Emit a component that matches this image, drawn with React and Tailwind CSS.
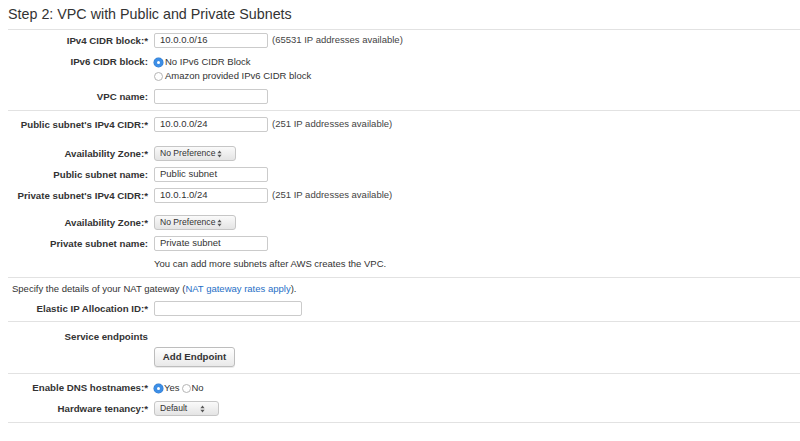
import clsx from "clsx";

function Field({ value = "", w = "w-[114px]", h = "h-[15px]" }) {
  return (
    <div
      className={clsx(
        "flex items-center whitespace-nowrap rounded-[2px] border border-[#cbcbcb] bg-white pl-[5px] text-[9.5px] text-[#333]",
        w,
        h,
      )}
    >
      {value}
    </div>
  );
}

function Arrows() {
  return (
    <svg width="5" height="8" viewBox="0 0 5 8" className="shrink-0">
      <path d="M2.5 0.5 L4.6 3.2 H0.4 Z" fill="#555" />
      <path d="M2.5 7.5 L4.6 4.8 H0.4 Z" fill="#555" />
    </svg>
  );
}

function Select({ value, w }) {
  return (
    <div
      className={clsx(
        "flex h-[15px] items-center justify-between whitespace-nowrap rounded-[3px] border border-[#c6c6c6] bg-gradient-to-b from-[#fafafa] to-[#e4e4e4] pl-[5px] pr-[13px] text-[8.6px] text-[#333]",
        w,
      )}
    >
      <span>{value}</span>
      <Arrows />
    </div>
  );
}

function Radio({ checked }) {
  return checked ? (
    <span className="flex h-[9px] w-[9px] shrink-0 items-center justify-center rounded-full bg-[#3d8ee6] ring-[0.5px] ring-[#2f78c8]">
      <span className="h-[3px] w-[3px] rounded-full bg-white" />
    </span>
  ) : (
    <span className="h-[9px] w-[9px] shrink-0 rounded-full border border-[#b5b5b5] bg-white" />
  );
}

function Row({ label, children, className, top }) {
  return (
    <div className={clsx("flex", top ? "items-start" : "items-center", className)}>
      <div className="w-[140px] shrink-0 whitespace-nowrap text-right text-[9.7px] font-bold leading-[14px] text-[#333]">
        {label}
      </div>
      <div className="ml-[6px] flex items-center">{children}</div>
    </div>
  );
}

function Note({ children }) {
  return <span className="ml-[4px] whitespace-nowrap text-[9.5px] text-[#444]">{children}</span>;
}

export default function App() {
  return (
    <div className="min-h-[441px] w-[800px] bg-white pl-[8px] font-['Liberation_Sans',Arial,sans-serif] text-[#333]">
      <div className="flex h-[29px] items-center text-[14.3px] text-[#333]">
        Step 2: VPC with Public and Private Subnets
      </div>

      <section className="border-t border-[#e2e2e2] pt-[3px] pb-[6px]">
        <Row label="IPv4 CIDR block:*">
          <Field value="10.0.0.0/16" />
          <Note>(65531 IP addresses available)</Note>
        </Row>
        <Row label="IPv6 CIDR block:" top className="mt-[7px]">
          <div className="flex flex-col text-[9.5px] leading-[14px]">
            <div className="flex items-center gap-[2px]">
              <Radio checked />
              No IPv6 CIDR Block
            </div>
            <div className="flex items-center gap-[2px]">
              <Radio />
              Amazon provided IPv6 CIDR block
            </div>
          </div>
        </Row>
        <Row label="VPC name:" className="mt-[6px]">
          <Field />
        </Row>
      </section>

      <section className="border-t border-[#e2e2e2] pt-[6px] pb-[6px]">
        <Row label="Public subnet's IPv4 CIDR:*">
          <Field value="10.0.0.0/24" />
          <Note>(251 IP addresses available)</Note>
        </Row>
        <Row label="Availability Zone:*" className="mt-[14px]">
          <Select value="No Preference" w="w-[82px]" />
        </Row>
        <Row label="Public subnet name:" className="mt-[6px]">
          <Field value="Public subnet" />
        </Row>
        <Row label="Private subnet's IPv4 CIDR:*" className="mt-[6px]">
          <Field value="10.0.1.0/24" />
          <Note>(251 IP addresses available)</Note>
        </Row>
        <Row label="Availability Zone:*" className="mt-[12px]">
          <Select value="No Preference" w="w-[82px]" />
        </Row>
        <Row label="Private subnet name:" className="mt-[6px]">
          <Field value="Private subnet" />
        </Row>
        <div className="mt-[6px] pl-[146px] text-[9.5px] leading-[14px] text-[#333]">
          You can add more subnets after AWS creates the VPC.
        </div>
      </section>

      <section className="border-t border-[#e2e2e2] pt-[4px] pb-[5px]">
        <div className="pl-[4px] text-[9.5px] leading-[14px] text-[#333]">
          Specify the details of your NAT gateway (
          <span className="text-[#1f6fc6]">NAT gateway rates apply</span>).
        </div>
        <Row label="Elastic IP Allocation ID:*" className="mt-[5px]">
          <Field w="w-[148px]" />
        </Row>
      </section>

      <section className="border-t border-[#e2e2e2] pt-[8px] pb-[6px]">
        <Row label="Service endpoints" />
        <div className="mt-[3px] flex pl-[146px]">
          <button className="flex h-[20px] w-[81px] items-center justify-center rounded-[3px] border border-[#bdbdbd] bg-gradient-to-b from-[#ffffff] to-[#e9e9e9] text-[9.7px] font-bold text-[#333] shadow-[0_1px_0_rgba(0,0,0,0.08)]">
            Add Endpoint
          </button>
        </div>
      </section>

      <section className="border-t border-[#e2e2e2] pt-[7px] pb-[6px]">
        <Row label="Enable DNS hostnames:*">
          <div className="flex items-center text-[9.5px] leading-[14px]">
            <div className="flex items-center gap-[1px]">
              <Radio checked />
              Yes
            </div>
            <div className="ml-[2px] flex items-center gap-[1px]">
              <Radio />
              No
            </div>
          </div>
        </Row>
        <Row label="Hardware tenancy:*" className="mt-[6px]">
          <Select value="Default" w="w-[65px]" />
        </Row>
      </section>
      <div className="border-t border-[#e2e2e2]" />
    </div>
  );
}
